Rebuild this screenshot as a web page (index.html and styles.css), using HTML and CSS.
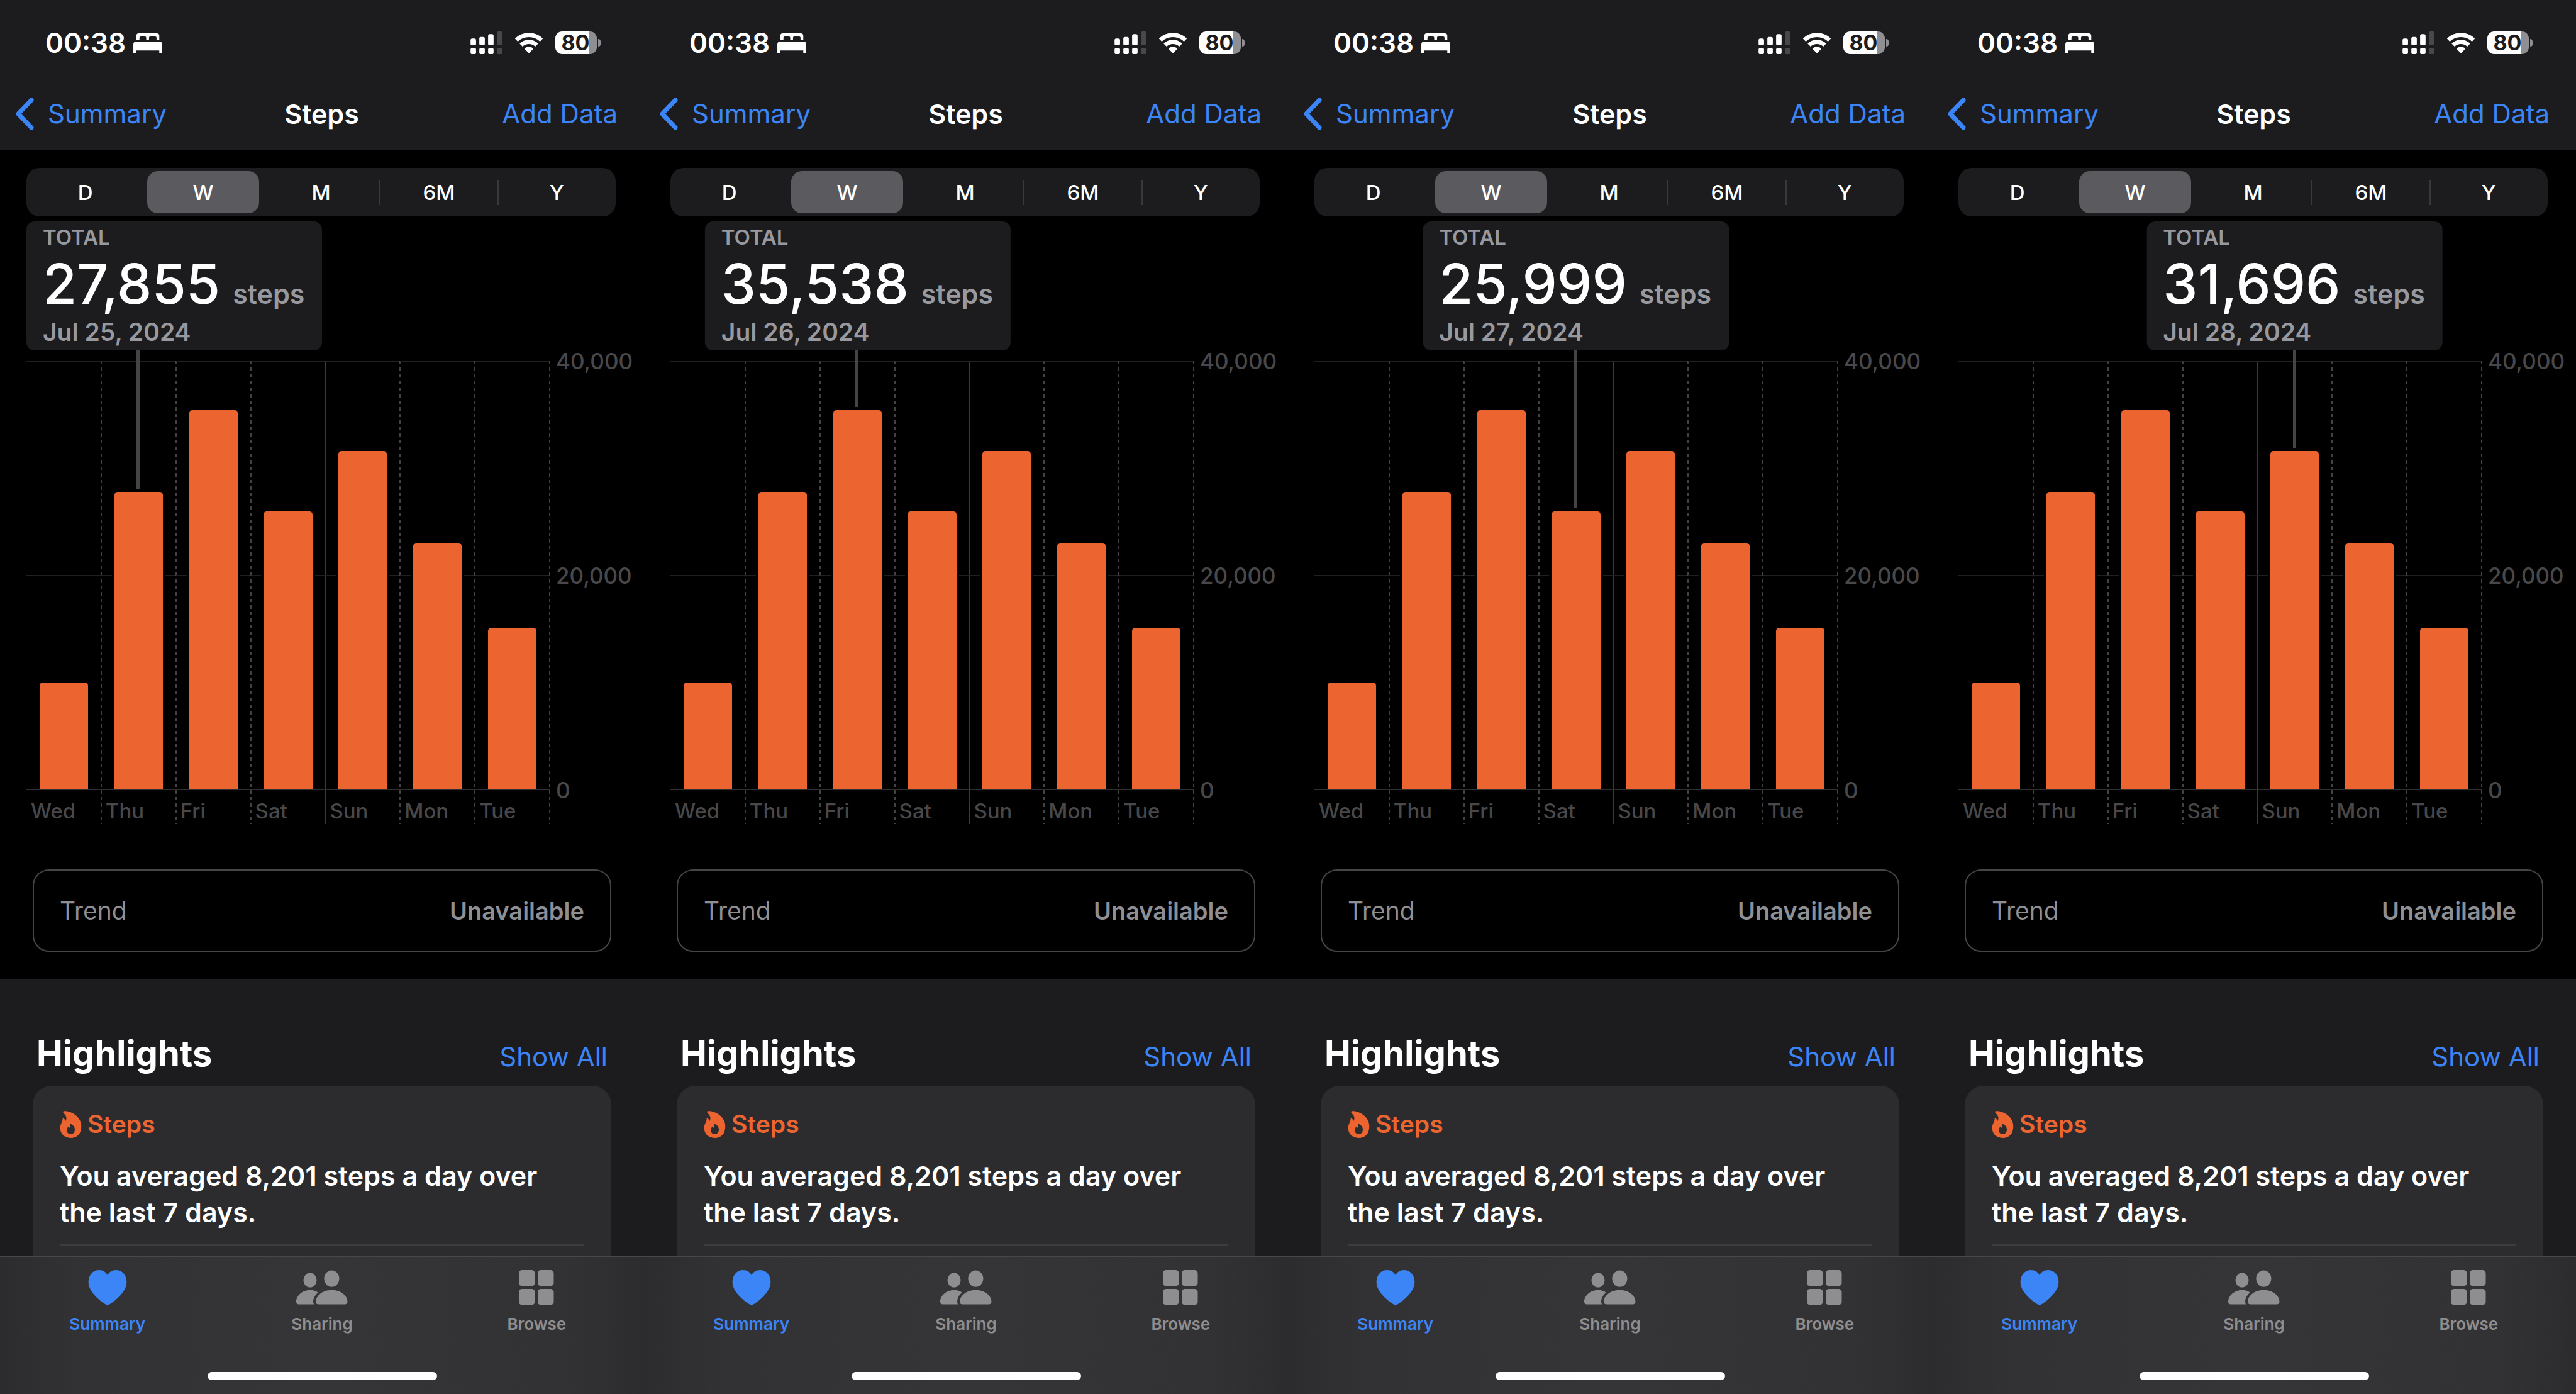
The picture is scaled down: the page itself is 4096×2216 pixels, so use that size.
FILE: index.html
```html
<!DOCTYPE html>
<html lang="en">
<head>
<meta charset="utf-8">
<meta name="viewport" content="width=device-width, initial-scale=1">
<title>Steps</title>
<link rel="stylesheet" href="styles.css">
</head>
<body>
<svg class="sprite" aria-hidden="true">
  <symbol id="bed" viewBox="0 0 157 106"><path d="M16 35V14Q16 0 30 0H127Q141 0 141 14V35H126V24Q126 17 119 17H92Q85 17 85 24V35H70V24Q70 17 63 17H40Q33 17 33 24V35ZM0 106V60Q0 45 15 45H142Q157 45 157 60V106H141V93H15V106Z"/></symbol>
  <symbol id="signal" viewBox="0 0 174 124"><rect y="39" width="30" height="37" rx="9"/><rect x="48" y="30" width="30" height="46" rx="9"/><rect x="96" y="15" width="30" height="61" rx="9"/><rect y="90" width="30" height="34" rx="9"/><rect x="48" y="90" width="30" height="34" rx="9"/><rect x="96" y="90" width="30" height="34" rx="9"/><g fill="#48484a"><rect x="144" width="30" height="76" rx="9"/><rect x="144" y="90" width="30" height="34" rx="9"/></g></symbol>
  <symbol id="wifi" viewBox="0 0 152 112"><g fill="none" stroke="currentColor" stroke-width="23"><path d="M7 39A100 100 0 0 1 145 39"/><path d="M33 67A62 62 0 0 1 119 67"/></g><path d="M76 112L53 89Q51 86 54 84Q76 67 98 84Q101 86 99 89Z"/></symbol>
  <symbol id="chevron" viewBox="0 0 30 52"><path d="M26 4L5 26L26 48" fill="none" stroke="currentColor" stroke-width="7" stroke-linecap="round" stroke-linejoin="round"/></symbol>
  <symbol id="flame" viewBox="0 0 114 146"><path fill-rule="evenodd" d="M15 3C20-1 35 0 50 5C88 17 114 48 114 82C114 122 92 146 57 146C22 146 0 124 0 92C0 75 8 62 13 50C14 45 12 41 13 38C20 40 26 46 30 54C34 42 36 32 26 20C20 12 14 8 15 3ZM53 69C70 74 80 88 79 102C78 117 70 125 58 125C45 125 36 117 36 105C36 96 40 90 44 84C46 84 49 88 51 92C55 84 56 76 53 69Z"/></symbol>
  <symbol id="heart" viewBox="0 0 204 188"><path d="M102 188C96 188 0 130 0 64C0 26 26 0 56 0C78 0 94 11 102 27C110 11 126 0 148 0C178 0 204 26 204 64C204 130 108 188 102 188Z"/></symbol>
  <symbol id="people" viewBox="0 0 82 55"><ellipse cx="56.4" cy="13.1" rx="12" ry="13.2"/><ellipse cx="22" cy="15.6" rx="10.5" ry="11.5"/><path d="M36 54C32.5 54 31.3 52.5 31.3 49.5C31.3 41 41 31.2 56.4 31.2C71.8 31.2 81.5 41 81.5 49.5C81.5 52.5 80 54 77 54ZM4.5 54C1.2 54 0 52.5 0 49.5C0 41 9 31.2 22 31.2C27 31.2 31.5 32.8 34.7 35.2C29 40 26.5 46 27.2 51Q27.4 52.4 28 54Z"/></symbol>
  <symbol id="squares" viewBox="0 0 56 56"><rect width="25.5" height="25.5" rx="5"/><rect x="30" width="25.5" height="25.5" rx="5"/><rect y="30" width="25.5" height="25.5" rx="5"/><rect x="30" y="30" width="25.5" height="25.5" rx="5"/></symbol>
</svg>

<main class="phones">
<section class="phone">
  <header class="top">
    <div class="status"><span class="time">00:38</span><svg class="bed"><use href="#bed"/></svg><svg class="signal"><use href="#signal"/></svg><svg class="wifi"><use href="#wifi"/></svg><span class="battery">80</span></div>
    <nav class="nav"><a class="back" href="#"><svg class="chevron"><use href="#chevron"/></svg>Summary</a><h1 class="title">Steps</h1><a class="add" href="#">Add Data</a></nav>
  </header>
  <div class="range"><button class="seg">D</button><button class="seg seg-on">W</button><button class="seg">M</button><button class="seg seg-rule">6M</button><button class="seg seg-rule">Y</button></div>
  <div class="chart">
    <div class="callout callout-start"><div class="kind">TOTAL</div><div class="amount"><span class="count">27,855</span><span class="unit">steps</span></div><div class="date">Jul 25, 2024</div></div>
    <div class="days">
      <div class="day"><div class="slot"><div class="bar" style="height:24.95%"></div></div><span class="name">Wed</span></div>
      <div class="day"><div class="slot"><div class="marker" style="bottom:69.64%"></div><div class="bar" style="height:69.64%"></div></div><span class="name">Thu</span></div>
      <div class="day"><div class="slot"><div class="bar" style="height:88.85%"></div></div><span class="name">Fri</span></div>
      <div class="day"><div class="slot"><div class="bar" style="height:65%"></div></div><span class="name">Sat</span></div>
      <div class="day day-week"><div class="slot"><div class="bar" style="height:79.24%"></div></div><span class="name">Sun</span></div>
      <div class="day"><div class="slot"><div class="bar" style="height:57.7%"></div></div><span class="name">Mon</span></div>
      <div class="day"><div class="slot"><div class="bar" style="height:37.8%"></div></div><span class="name">Tue</span></div>
    </div>
    <div class="axis"><span>40,000</span><span>20,000</span><span>0</span></div>
  </div>
  <div class="trend"><span>Trend</span><span class="trend-value">Unavailable</span></div>
  <section class="highlights">
    <div class="heading"><h2 class="heading-title">Highlights</h2><a class="heading-link" href="#">Show All</a></div>
    <article class="card"><h3 class="card-kind"><svg class="flame"><use href="#flame"/></svg>Steps</h3><p class="card-text">You averaged 8,201 steps a day over the last 7 days.</p></article>
  </section>
  <footer class="tabs">
    <nav class="tab-row"><a class="tab tab-on" href="#"><svg class="tab-icon"><use href="#heart"/></svg>Summary</a><a class="tab" href="#"><svg class="tab-icon"><use href="#people"/></svg>Sharing</a><a class="tab" href="#"><svg class="tab-icon"><use href="#squares"/></svg>Browse</a></nav>
    <div class="home"></div>
  </footer>
</section>

<section class="phone">
  <header class="top">
    <div class="status"><span class="time">00:38</span><svg class="bed"><use href="#bed"/></svg><svg class="signal"><use href="#signal"/></svg><svg class="wifi"><use href="#wifi"/></svg><span class="battery">80</span></div>
    <nav class="nav"><a class="back" href="#"><svg class="chevron"><use href="#chevron"/></svg>Summary</a><h1 class="title">Steps</h1><a class="add" href="#">Add Data</a></nav>
  </header>
  <div class="range"><button class="seg">D</button><button class="seg seg-on">W</button><button class="seg">M</button><button class="seg seg-rule">6M</button><button class="seg seg-rule">Y</button></div>
  <div class="chart">
    <div class="callout" style="left:33.2%"><div class="kind">TOTAL</div><div class="amount"><span class="count">35,538</span><span class="unit">steps</span></div><div class="date">Jul 26, 2024</div></div>
    <div class="days">
      <div class="day"><div class="slot"><div class="bar" style="height:24.95%"></div></div><span class="name">Wed</span></div>
      <div class="day"><div class="slot"><div class="bar" style="height:69.64%"></div></div><span class="name">Thu</span></div>
      <div class="day"><div class="slot"><div class="marker" style="bottom:88.85%"></div><div class="bar" style="height:88.85%"></div></div><span class="name">Fri</span></div>
      <div class="day"><div class="slot"><div class="bar" style="height:65%"></div></div><span class="name">Sat</span></div>
      <div class="day day-week"><div class="slot"><div class="bar" style="height:79.24%"></div></div><span class="name">Sun</span></div>
      <div class="day"><div class="slot"><div class="bar" style="height:57.7%"></div></div><span class="name">Mon</span></div>
      <div class="day"><div class="slot"><div class="bar" style="height:37.8%"></div></div><span class="name">Tue</span></div>
    </div>
    <div class="axis"><span>40,000</span><span>20,000</span><span>0</span></div>
  </div>
  <div class="trend"><span>Trend</span><span class="trend-value">Unavailable</span></div>
  <section class="highlights">
    <div class="heading"><h2 class="heading-title">Highlights</h2><a class="heading-link" href="#">Show All</a></div>
    <article class="card"><h3 class="card-kind"><svg class="flame"><use href="#flame"/></svg>Steps</h3><p class="card-text">You averaged 8,201 steps a day over the last 7 days.</p></article>
  </section>
  <footer class="tabs">
    <nav class="tab-row"><a class="tab tab-on" href="#"><svg class="tab-icon"><use href="#heart"/></svg>Summary</a><a class="tab" href="#"><svg class="tab-icon"><use href="#people"/></svg>Sharing</a><a class="tab" href="#"><svg class="tab-icon"><use href="#squares"/></svg>Browse</a></nav>
    <div class="home"></div>
  </footer>
</section>

<section class="phone">
  <header class="top">
    <div class="status"><span class="time">00:38</span><svg class="bed"><use href="#bed"/></svg><svg class="signal"><use href="#signal"/></svg><svg class="wifi"><use href="#wifi"/></svg><span class="battery">80</span></div>
    <nav class="nav"><a class="back" href="#"><svg class="chevron"><use href="#chevron"/></svg>Summary</a><h1 class="title">Steps</h1><a class="add" href="#">Add Data</a></nav>
  </header>
  <div class="range"><button class="seg">D</button><button class="seg seg-on">W</button><button class="seg">M</button><button class="seg seg-rule">6M</button><button class="seg seg-rule">Y</button></div>
  <div class="chart">
    <div class="callout" style="left:44.7%"><div class="kind">TOTAL</div><div class="amount"><span class="count">25,999</span><span class="unit">steps</span></div><div class="date">Jul 27, 2024</div></div>
    <div class="days">
      <div class="day"><div class="slot"><div class="bar" style="height:24.95%"></div></div><span class="name">Wed</span></div>
      <div class="day"><div class="slot"><div class="bar" style="height:69.64%"></div></div><span class="name">Thu</span></div>
      <div class="day"><div class="slot"><div class="bar" style="height:88.85%"></div></div><span class="name">Fri</span></div>
      <div class="day"><div class="slot"><div class="marker" style="bottom:65%"></div><div class="bar" style="height:65%"></div></div><span class="name">Sat</span></div>
      <div class="day day-week"><div class="slot"><div class="bar" style="height:79.24%"></div></div><span class="name">Sun</span></div>
      <div class="day"><div class="slot"><div class="bar" style="height:57.7%"></div></div><span class="name">Mon</span></div>
      <div class="day"><div class="slot"><div class="bar" style="height:37.8%"></div></div><span class="name">Tue</span></div>
    </div>
    <div class="axis"><span>40,000</span><span>20,000</span><span>0</span></div>
  </div>
  <div class="trend"><span>Trend</span><span class="trend-value">Unavailable</span></div>
  <section class="highlights">
    <div class="heading"><h2 class="heading-title">Highlights</h2><a class="heading-link" href="#">Show All</a></div>
    <article class="card"><h3 class="card-kind"><svg class="flame"><use href="#flame"/></svg>Steps</h3><p class="card-text">You averaged 8,201 steps a day over the last 7 days.</p></article>
  </section>
  <footer class="tabs">
    <nav class="tab-row"><a class="tab tab-on" href="#"><svg class="tab-icon"><use href="#heart"/></svg>Summary</a><a class="tab" href="#"><svg class="tab-icon"><use href="#people"/></svg>Sharing</a><a class="tab" href="#"><svg class="tab-icon"><use href="#squares"/></svg>Browse</a></nav>
    <div class="home"></div>
  </footer>
</section>

<section class="phone">
  <header class="top">
    <div class="status"><span class="time">00:38</span><svg class="bed"><use href="#bed"/></svg><svg class="signal"><use href="#signal"/></svg><svg class="wifi"><use href="#wifi"/></svg><span class="battery">80</span></div>
    <nav class="nav"><a class="back" href="#"><svg class="chevron"><use href="#chevron"/></svg>Summary</a><h1 class="title">Steps</h1><a class="add" href="#">Add Data</a></nav>
  </header>
  <div class="range"><button class="seg">D</button><button class="seg seg-on">W</button><button class="seg">M</button><button class="seg seg-rule">6M</button><button class="seg seg-rule">Y</button></div>
  <div class="chart">
    <div class="callout" style="left:56.3%"><div class="kind">TOTAL</div><div class="amount"><span class="count">31,696</span><span class="unit">steps</span></div><div class="date">Jul 28, 2024</div></div>
    <div class="days">
      <div class="day"><div class="slot"><div class="bar" style="height:24.95%"></div></div><span class="name">Wed</span></div>
      <div class="day"><div class="slot"><div class="bar" style="height:69.64%"></div></div><span class="name">Thu</span></div>
      <div class="day"><div class="slot"><div class="bar" style="height:88.85%"></div></div><span class="name">Fri</span></div>
      <div class="day"><div class="slot"><div class="bar" style="height:65%"></div></div><span class="name">Sat</span></div>
      <div class="day day-week"><div class="slot"><div class="marker" style="bottom:79.24%"></div><div class="bar" style="height:79.24%"></div></div><span class="name">Sun</span></div>
      <div class="day"><div class="slot"><div class="bar" style="height:57.7%"></div></div><span class="name">Mon</span></div>
      <div class="day"><div class="slot"><div class="bar" style="height:37.8%"></div></div><span class="name">Tue</span></div>
    </div>
    <div class="axis"><span>40,000</span><span>20,000</span><span>0</span></div>
  </div>
  <div class="trend"><span>Trend</span><span class="trend-value">Unavailable</span></div>
  <section class="highlights">
    <div class="heading"><h2 class="heading-title">Highlights</h2><a class="heading-link" href="#">Show All</a></div>
    <article class="card"><h3 class="card-kind"><svg class="flame"><use href="#flame"/></svg>Steps</h3><p class="card-text">You averaged 8,201 steps a day over the last 7 days.</p></article>
  </section>
  <footer class="tabs">
    <nav class="tab-row"><a class="tab tab-on" href="#"><svg class="tab-icon"><use href="#heart"/></svg>Summary</a><a class="tab" href="#"><svg class="tab-icon"><use href="#people"/></svg>Sharing</a><a class="tab" href="#"><svg class="tab-icon"><use href="#squares"/></svg>Browse</a></nav>
    <div class="home"></div>
  </footer>
</section>
</main>
</body>
</html>
```
FILE: styles.css
```css
:root {
  --blue: #3c85f7;
  --orange: #ec6430;
  --panel: #1c1c1e;
  --muted: #98989f;
  --faint: #48484a;
}
* { box-sizing: border-box; }
body {
  margin: 0;
  background: #000;
  color: #fff;
  font-family: Inter, "Liberation Sans", sans-serif;
  font-size: 43px;
}
h1, h2, h3, p { margin: 0; font-size: inherit; }
a { color: var(--blue); text-decoration: none; }
svg { display: block; flex: none; fill: currentColor; }
.sprite { position: absolute; width: 0; height: 0; }

.phones { display: grid; grid-template-columns: repeat(4, 1fr); }
.phone { display: flex; flex-direction: column; height: 100vh; min-width: 0; overflow: hidden; }

/* Status and navigation bars */
.top { background: var(--panel); }
.status { display: flex; align-items: center; height: 124px; padding: 12px 75px 0 72px; }
.time { font-size: 44px; font-weight: 600; }
.bed { width: 46px; height: 31px; margin: 0 auto 0 12px; }
.signal { width: 51px; height: 36px; }
.wifi { width: 44px; height: 33px; margin: 0 20px; }
.battery {
  position: relative;
  width: 66px;
  height: 36px;
  padding-right: 2px;
  border-radius: 11px;
  background: linear-gradient(90deg, #fff 80%, #8e8e93 80%);
  color: var(--panel);
  font-size: 34px;
  font-weight: 700;
  line-height: 36px;
  text-align: center;
}
.battery::after {
  content: "";
  position: absolute;
  left: 100%;
  top: 12px;
  width: 4px;
  height: 12px;
  margin-left: 2px;
  border-radius: 0 4px 4px 0;
  background: #8e8e93;
}
.nav {
  display: grid;
  grid-template-columns: 1fr auto 1fr;
  align-items: center;
  height: 115px;
  padding: 0 42px 2px 24px;
}
.back { display: flex; align-items: center; gap: 22px; font-size: 42px; }
.chevron { width: 30px; height: 52px; }
.title { margin-left: 17px; font-weight: 600; }
.add { font-size: 42px; text-align: right; }

/* Range picker */
.range {
  display: flex;
  height: 77px;
  margin: 28px 45px 0 42px;
  border-radius: 21px;
  background: var(--panel);
}
.seg {
  position: relative;
  flex: 1;
  margin: 5px;
  padding: 0;
  border: 0;
  border-radius: 17px;
  background: none;
  color: inherit;
  font: 500 33px Inter, sans-serif;
}
.seg-on { background: #5b5a5f; }
.seg-rule::before {
  content: "";
  position: absolute;
  left: -6px;
  top: 14px;
  width: 2px;
  height: 40px;
  background: #39393d;
}

/* Chart */
.chart { position: relative; display: flex; padding: 230px 0 0 42px; }
.callout {
  position: absolute;
  top: 8px;
  z-index: 2;
  padding: 2px 28px 3px 26px;
  border-radius: 13px;
  background: var(--panel);
  color: var(--muted);
  font-weight: 600;
  white-space: nowrap;
  transform: translateX(-50%);
}
.callout-start { left: 42px; transform: none; }
.kind { font-size: 33px; line-height: 46px; }
.amount { display: flex; align-items: baseline; gap: 20px; }
.count { color: #fff; font-size: 88px; font-weight: 500; line-height: 102px; }
.unit { font-size: 43px; line-height: 43px; }
.date { font-size: 39px; line-height: 52px; }

.days { display: flex; flex: 1; position: relative; }
.day { position: relative; flex: 1; }
.day::before, .days::after {
  content: "";
  position: absolute;
  left: -1px;
  top: 0;
  bottom: 0;
  width: 2px;
  background: repeating-linear-gradient(#424245 0 5px, transparent 5px 10px, #424245 10px 16px, transparent 16px 21px);
}
.days::after { left: auto; right: -1px; }
.day:first-child::before { bottom: 54px; width: 1px; background: #2c2c2e; }
.day-week::before { background: #3a3a3c; }
.slot {
  position: relative;
  display: flex;
  align-items: flex-end;
  justify-content: center;
  height: 682px;
  border-top: 2px solid #202022;
  border-bottom: 2px solid #303032;
  background: linear-gradient(#202022, #202022) center / 100% 2px no-repeat;
}
.bar {
  width: 65%;
  border-radius: 5px 5px 0 0;
  background: var(--orange);
  box-shadow: -4px 0 #000, 4px 0 #000;
}
.marker {
  position: absolute;
  top: -20px;
  left: 50%;
  width: 5px;
  margin: 0 0 5px -3px;
  background: #444446;
}
.name {
  display: block;
  padding: 13px 0 1px 7px;
  color: var(--faint);
  font-size: 33px;
  font-weight: 500;
  line-height: 40px;
}
.axis {
  display: flex;
  flex-direction: column;
  justify-content: space-between;
  width: 150px;
  margin: -17px 0 37px;
  padding-left: 10px;
  color: var(--faint);
  font-size: 35px;
  font-weight: 500;
  line-height: 34px;
}

.trend {
  display: flex;
  align-items: center;
  justify-content: space-between;
  height: 131px;
  margin: 72px 52px 43px;
  padding: 0 41px;
  border: 2px solid #464648;
  border-radius: 26px;
  color: #8e8e93;
  font-size: 39px;
}
.trend-value { font-size: 38px; font-weight: 600; }

/* Highlights */
.highlights {
  display: flex;
  flex: 1 1 0;
  flex-direction: column;
  min-height: 0;
  padding: 79px 52px 0;
  overflow: hidden;
  background: var(--panel);
}
.heading {
  display: flex;
  align-items: baseline;
  justify-content: space-between;
  padding: 0 6px;
  margin-bottom: 11px;
}
.heading-title { font-size: 56px; font-weight: 700; line-height: 80px; }
.heading-link { font-size: 42px; line-height: 50px; }
.card {
  flex: 1;
  padding: 32px 43px 0;
  border-radius: 30px 30px 0 0;
  background: #2c2c2e;
}
.card-kind {
  display: flex;
  align-items: center;
  gap: 9px;
  color: var(--orange);
  font-size: 39px;
  font-weight: 600;
  line-height: 58px;
}
.flame { width: 35px; height: 43px; }
.card-text {
  margin-top: 24px;
  padding-bottom: 22px;
  border-bottom: 2px solid #3d3d40;
  font-weight: 600;
  line-height: 58px;
}

/* Tab bar */
.tabs {
  padding: 21px 0 22px;
  border-top: 1px solid #48484a;
  background: linear-gradient(90deg, #2c2c2e, #323234 12%, #353537 50%, #323234 88%, #2c2c2e);
}
.tab-row { display: flex; }
.tab {
  display: flex;
  flex: 1;
  flex-direction: column;
  align-items: center;
  gap: 13px;
  color: #8e8e90;
  font-size: 26px;
  font-weight: 600;
  line-height: 34px;
}
.tab-on { color: var(--blue); }
.tab-icon { width: 82px; height: 56px; }
.home { width: 365px; height: 13px; margin: 59px auto 0; border-radius: 7px; background: #fff; }
```
